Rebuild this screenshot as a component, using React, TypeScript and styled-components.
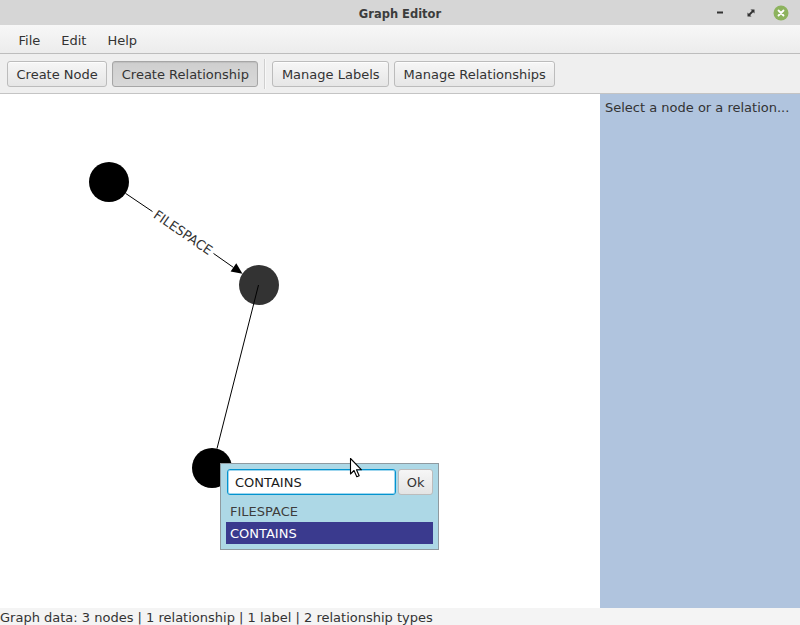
import React from "react";
import styled, { createGlobalStyle } from "styled-components";

const Global = createGlobalStyle`
  html, body { margin: 0; padding: 0; background: #ffffff; }
  body { font-family: "DejaVu Sans", "Liberation Sans", sans-serif; font-size: 13px; color: #333; }
  * { box-sizing: border-box; }
`;

const Window = styled.div`
  width: 800px;
  height: 625px;
  display: flex;
  flex-direction: column;
  overflow: hidden;
  background: #fff;
`;

const TitleBar = styled.div`
  height: 25px;
  flex: none;
  background: #d6d6d6;
  display: flex;
  align-items: center;
  justify-content: center;
  position: relative;
`;

const Title = styled.div`
  font-weight: bold;
  font-size: 11.5px;
  color: #3c3c3c;
  padding-top: 2px;
`;

const Controls = styled.div`
  position: absolute;
  right: 9px;
  top: 4px;
  display: flex;
  align-items: center;
`;

const Ctrl = styled.div<{ $w: number }>`
  width: ${(p) => p.$w}px;
  height: 17px;
  display: flex;
  align-items: center;
  justify-content: center;
`;

const MenuBar = styled.div`
  height: 29px;
  flex: none;
  display: flex;
  align-items: center;
  padding: 3px 0 0 8px;
  background: linear-gradient(#f7f7f7, #ececec);
  border-bottom: 1px solid #bdbdbd;
`;

const MenuItem = styled.div`
  padding: 0 10.5px;
  color: #333;
  font-size: 13px;
  line-height: 16px;
`;

const ToolBar = styled.div`
  height: 40px;
  flex: none;
  display: flex;
  align-items: center;
  padding: 1px 7px 0;
  gap: 5px;
  background: #efefef;
  border-bottom: 1px solid #c4c4c4;
`;

const Button = styled.button<{ $pressed?: boolean }>`
  height: 26px;
  padding: 1px 8.5px 0;
  margin: 0;
  font-family: "DejaVu Sans", "Liberation Sans", sans-serif;
  font-size: 13px;
  color: #333;
  border: 1px solid ${(p) => (p.$pressed ? "#a6a6a6" : "#bcbcbc")};
  border-radius: 3px;
  background: ${(p) =>
    p.$pressed ? "linear-gradient(#cfcfcf, #d8d8d8)" : "linear-gradient(#f6f6f6, #e6e6e6)"};
  box-shadow: ${(p) => (p.$pressed ? "inset 0 1px 1px rgba(0,0,0,0.08)" : "inset 0 1px 0 #fdfdfd")};
  white-space: nowrap;
`;

const Separator = styled.div`
  width: 1px;
  height: 30px;
  background: #cfcfcf;
  border-right: 1px solid #f8f8f8;
  box-sizing: content-box;
  margin: 0 1px;
`;

const Main = styled.div`
  flex: 1;
  display: flex;
  min-height: 0;
`;

const Canvas = styled.div`
  width: 600px;
  position: relative;
  background: #fff;
  overflow: hidden;
`;

const Drawing = styled.svg`
  position: absolute;
  left: 0;
  top: 0;
  width: 600px;
  height: 514px;
`;

const Side = styled.div`
  flex: 1;
  background: #b0c4de;
  padding: 5px 5px;
  color: #333;
  font-size: 13px;
  line-height: 17px;
`;

const StatusBar = styled.div`
  height: 17px;
  flex: none;
  background: #f4f4f4;
  color: #333;
  font-size: 13px;
  line-height: 17px;
  padding-top: 1px;
  overflow: hidden;
  white-space: nowrap;
`;

const Popup = styled.div`
  position: absolute;
  left: 220px;
  top: 369px;
  width: 219px;
  background: #add8e6;
  border: 1px solid #8f9aa0;
  padding: 5px 5px 5px 5px;
  display: flex;
  flex-direction: column;
`;

const InputRow = styled.div`
  display: flex;
  gap: 2px;
  padding-left: 1px;
  margin-bottom: 6px;
`;

const Input = styled.div`
  width: 170px;
  height: 26px;
  background: #fff;
  border: 1px solid #0393cf;
  box-shadow: inset 0 0 0 1px #9fd6ee;
  border-radius: 3px;
  padding-left: 7px;
  display: flex;
  align-items: center;
  color: #1a1a1a;
  font-size: 13px;
`;

const OkButton = styled.div`
  width: 35px;
  height: 26px;
  border: 1px solid #bcbcbc;
  border-radius: 3px;
  background: linear-gradient(#f6f6f6, #e4e4e4);
  display: flex;
  align-items: center;
  justify-content: center;
  color: #333;
  font-size: 13px;
`;

const ListItem = styled.div<{ $selected?: boolean }>`
  height: ${(p) => (p.$selected ? 22 : 20)}px;
  width: 207px;
  margin-top: ${(p) => (p.$selected ? 1 : 0)}px;
  padding-left: 4px;
  display: flex;
  align-items: center;
  font-size: 13px;
  color: ${(p) => (p.$selected ? "#ffffff" : "#3d3d3d")};
  background: ${(p) => (p.$selected ? "#3a3a8e" : "transparent")};
`;

const Cursor = styled.svg`
  position: absolute;
  left: 349px;
  top: 363px;
`;

// canvas offset: top at y=94
const OY = 94;

function Graph() {
  const n1 = { x: 109, y: 182 - OY };
  const n2 = { x: 259, y: 285 - OY };
  const n3 = { x: 212, y: 468 - OY };
  const dx = n2.x - n1.x;
  const dy = n2.y - n1.y;
  const len = Math.hypot(dx, dy);
  const ux = dx / len;
  const uy = dy / len;
  const ang = (Math.atan2(dy, dx) * 180) / Math.PI;
  const start = { x: n1.x + ux * 20, y: n1.y + uy * 20 };
  const tip = { x: n2.x - ux * 20, y: n2.y - uy * 20 };
  const mid = { x: (n1.x + n2.x) / 2 - 1, y: (n1.y + n2.y) / 2 - 1 };
  const half = 37;
  const gapA = { x: mid.x - ux * half, y: mid.y - uy * half };
  const gapB = { x: mid.x + ux * half, y: mid.y + uy * half };
  const base = { x: tip.x - ux * 11, y: tip.y - uy * 11 };
  const px = -uy;
  const py = ux;
  const arrow = `${tip.x},${tip.y} ${base.x + px * 5},${base.y + py * 5} ${base.x - px * 5},${base.y - py * 5}`;

  const e2dx = n3.x - n2.x;
  const e2dy = n3.y - n2.y;
  const e2len = Math.hypot(e2dx, e2dy);
  const e2end = { x: n3.x - (e2dx / e2len) * 20, y: n3.y - (e2dy / e2len) * 20 };

  return (
    <Drawing viewBox="0 0 600 514">
      <circle cx={n1.x} cy={n1.y} r={20} fill="#000" />
      <circle cx={n2.x} cy={n2.y} r={20} fill="#333" />
      <circle cx={n3.x} cy={n3.y} r={20} fill="#000" />
      <line x1={start.x} y1={start.y} x2={gapA.x} y2={gapA.y} stroke="#000" strokeWidth={1} />
      <line x1={gapB.x} y1={gapB.y} x2={base.x} y2={base.y} stroke="#000" strokeWidth={1} />
      <polygon points={arrow} fill="#000" />
      <text
        x={mid.x}
        y={mid.y}
        transform={`rotate(${ang} ${mid.x} ${mid.y})`}
        textAnchor="middle"
        dominantBaseline="central"
        fontFamily="DejaVu Sans, sans-serif"
        fontSize={13}
        fill="#333"
      >
        FILESPACE
      </text>
      <line x1={n2.x - 0.5} y1={n2.y} x2={e2end.x} y2={e2end.y} stroke="#000" strokeWidth={1} />
    </Drawing>
  );
}

export default function App() {
  return (
    <>
      <Global />
      <Window>
        <TitleBar>
          <Title>Graph Editor</Title>
          <Controls>
            <Ctrl $w={22}>
              <svg width="8" height="3" viewBox="0 0 8 3">
                <rect x="1" y="0.5" width="6" height="2" fill="#333" />
              </svg>
            </Ctrl>
            <Ctrl $w={40}>
              <svg width="8" height="8" viewBox="0 0 8 8">
                <polygon points="3.5,0.5 7.5,0.5 7.5,4.5" fill="#333" />
                <polygon points="0.5,3.5 0.5,7.5 4.5,7.5" fill="#333" />
                <line x1="6.5" y1="1.5" x2="1.5" y2="6.5" stroke="#333" strokeWidth="1.8" />
              </svg>
            </Ctrl>
            <Ctrl $w={20}>
              <svg width="16" height="16" viewBox="0 0 16 16">
                <circle cx="8" cy="8" r="7.5" fill="#8db35e" />
                <path d="M5.5 5.5 L10.5 10.5 M10.5 5.5 L5.5 10.5" stroke="#fff" strokeWidth="1.8" strokeLinecap="round" />
              </svg>
            </Ctrl>
          </Controls>
        </TitleBar>
        <MenuBar>
          <MenuItem>File</MenuItem>
          <MenuItem>Edit</MenuItem>
          <MenuItem>Help</MenuItem>
        </MenuBar>
        <ToolBar>
          <Button>Create Node</Button>
          <Button $pressed>Create Relationship</Button>
          <Separator />
          <Button>Manage Labels</Button>
          <Button>Manage Relationships</Button>
        </ToolBar>
        <Main>
          <Canvas>
            <Graph />
            <Popup>
              <InputRow>
                <Input>CONTAINS</Input>
                <OkButton>Ok</OkButton>
              </InputRow>
              <ListItem>FILESPACE</ListItem>
              <ListItem $selected>CONTAINS</ListItem>
            </Popup>
            <Cursor width="14" height="22" viewBox="0 0 14 22">
              <path
                d="M1.5 1.5 L1.5 17 L5 13.5 L7.8 19.8 L10.2 18.8 L7.5 12.8 L12.5 12.8 Z"
                fill="#fff"
                stroke="#000"
                strokeWidth="1.1"
                strokeLinejoin="round"
              />
            </Cursor>
          </Canvas>
          <Side>Select a node or a relation...</Side>
        </Main>
        <StatusBar>Graph data: 3 nodes | 1 relationship | 1 label | 2 relationship types</StatusBar>
      </Window>
    </>
  );
}
